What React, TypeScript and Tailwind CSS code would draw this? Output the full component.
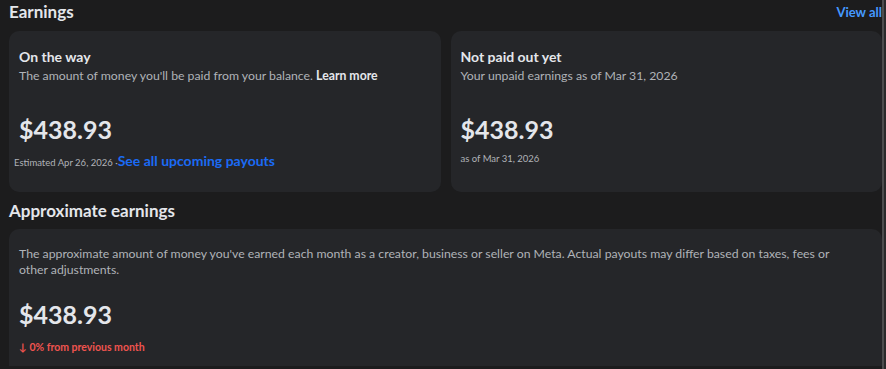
export default function App() {
  return (
    <div className="flex min-h-[369px] bg-[#1c1c1d] font-['Lato',sans-serif] text-[#e4e6eb]">
      <div className="flex-1 pl-[9px]">
        <div className="flex items-center justify-between pt-[1px] mb-[8px]">
          <h2 className="text-[17px] leading-[22px] font-bold">Earnings</h2>
          <a className="text-[13px] leading-[22px] font-bold text-[#4599ff]">View all</a>
        </div>

        <div className="grid grid-cols-2 gap-[10px]">
          <div className="h-[161px] rounded-[10px] bg-[#252629] pl-[10px] pr-3 pt-[16px]">
            <div className="text-[14px] leading-[20px] font-bold">On the way</div>
            <p className="mt-[1px] text-[12.25px] leading-[16px] text-[#b0b3b8]">
              The amount of money you'll be paid from your balance.{" "}
              <span className="font-bold text-[#e4e6eb]">Learn more</span>
            </p>
            <div className="mt-[29px] text-[25px] leading-[32px] font-bold">$438.93</div>
            <div className="mt-[7px] -ml-[5px] text-[9.5px] leading-[18px] text-[#b0b3b8]">
              Estimated Apr 26, 2026 ·
              <a className="text-[14px] leading-[18px] font-bold text-[#1b6bf5]">See all upcoming payouts</a>
            </div>
          </div>

          <div className="h-[161px] rounded-[10px] bg-[#252629] pl-[10px] pr-3 pt-[16px]">
            <div className="text-[14px] leading-[20px] font-bold">Not paid out yet</div>
            <p className="mt-[1px] text-[12.25px] leading-[16px] text-[#b0b3b8]">Your unpaid earnings as of Mar 31, 2026</p>
            <div className="mt-[29px] text-[25px] leading-[32px] font-bold">$438.93</div>
            <div className="mt-[7px] text-[9.5px] leading-[14px] text-[#b0b3b8]">as of Mar 31, 2026</div>
          </div>
        </div>

        <h2 className="mt-[8px] mb-[7px] text-[17px] leading-[22px] font-bold">Approximate earnings</h2>

        <div className="rounded-t-[10px] bg-[#252629] pl-[10px] pr-[10px] pt-[17px] pb-[12px]">
          <p className="max-w-[835px] text-[12.25px] leading-[16px] text-[#b0b3b8]">
            The approximate amount of money you've earned each month as a creator, business or seller on Meta. Actual
            payouts may differ based on taxes, fees or other adjustments.
          </p>
          <div className="mt-[20px] text-[25px] leading-[32px] font-bold">$438.93</div>
          <div className="mt-[10px] text-[10.5px] leading-[14px] font-bold text-[#f0544f]">↓ 0% from previous month</div>
        </div>
      </div>

      <div className="flex">
        <div className="w-[2px] bg-[#4d4d4e]" />
        <div className="w-[2px] bg-[#2a2a2b]" />
      </div>
    </div>
  )
}
